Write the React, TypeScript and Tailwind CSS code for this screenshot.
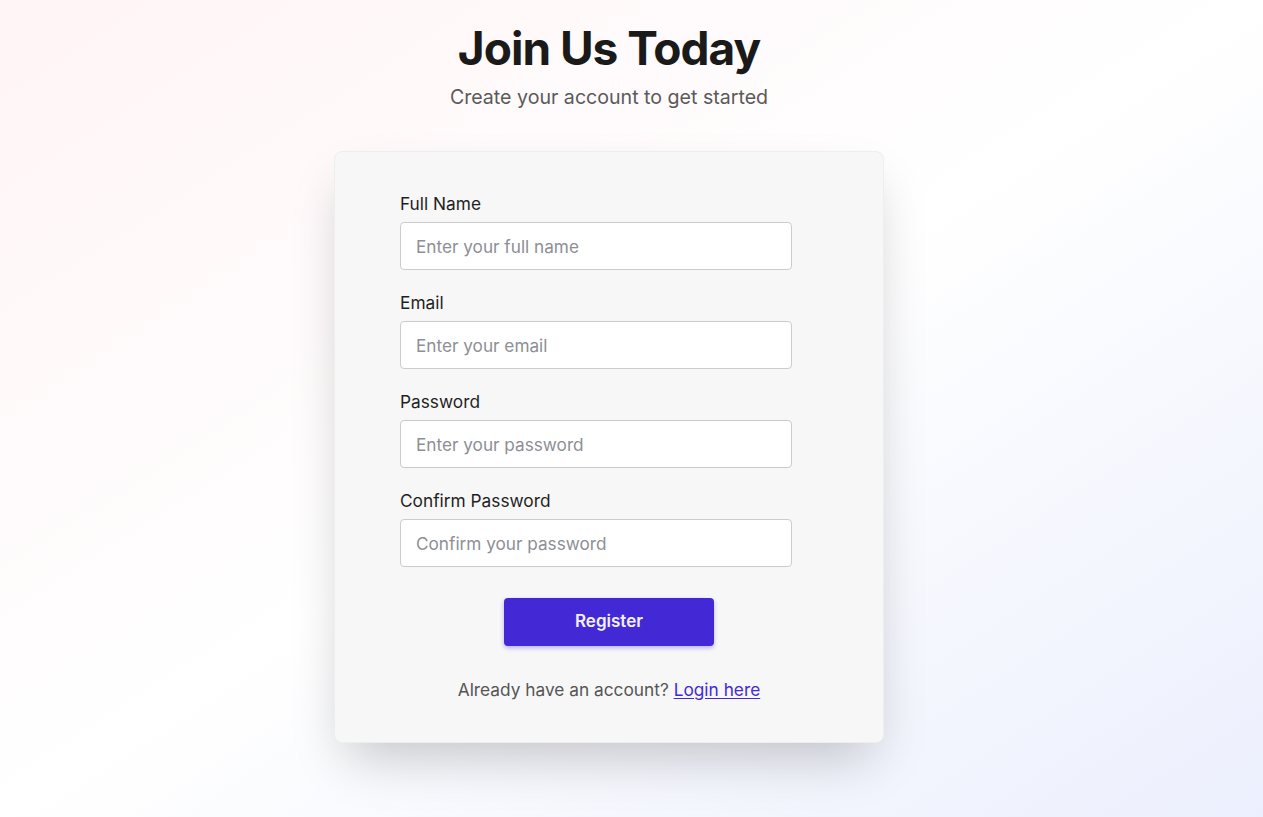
import { useState } from 'react'

function Field({ label, type, placeholder, value, onChange }: {
    label: string
    type: string
    placeholder: string
    value: string
    onChange: (v: string) => void
}) {
    return (
        <div className="mb-[21px] ml-px w-[392px]">
            <label className="block text-[17.3px] leading-6 text-[#1f1f1f] mb-1.5">{label}</label>
            <input
                type={type}
                placeholder={placeholder}
                value={value}
                onChange={(e) => onChange(e.target.value)}
                className="w-full h-12 px-[15px] bg-white border border-[#cccccc] rounded-[4px] text-[17.2px] text-[#1f1f1f] placeholder:text-[#8d8f95] outline-none"
            />
        </div>
    )
}

export default function App() {
    const [name, setName] = useState('')
    const [email, setEmail] = useState('')
    const [password, setPassword] = useState('')
    const [confirm, setConfirm] = useState('')

    return (
        <div
            className="min-h-[817px] w-full bg-gradient-to-br from-[#fff4f6] via-[#ffffff] to-[#eceffd] font-['Inter',sans-serif]"
        >
            <div className="w-[1218px] flex flex-col items-center pt-6">
                <h1 className="text-[46px] leading-[48px] font-bold text-[#1a1a1a] tracking-[-1px]">Join Us Today</h1>
                <p className="mt-[11px] text-[19.6px] leading-7 text-[#5a5a5a]">Create your account to get started</p>

                <div className="mt-[40px] w-[550px] bg-[#f7f7f7] rounded-lg border border-[#eeeeee] shadow-[0_25px_50px_-12px_rgba(0,0,0,0.22)] px-[64px] pt-10 pb-10">
                    <form onSubmit={(e) => e.preventDefault()} className="w-full">
                        <Field label="Full Name" type="text" placeholder="Enter your full name" value={name} onChange={setName} />
                        <Field label="Email" type="email" placeholder="Enter your email" value={email} onChange={setEmail} />
                        <Field label="Password" type="password" placeholder="Enter your password" value={password} onChange={setPassword} />
                        <Field label="Confirm Password" type="password" placeholder="Confirm your password" value={confirm} onChange={setConfirm} />

                        <div className="flex justify-center mt-[31px]">
                            <button
                                type="submit"
                                className="w-[210px] h-12 bg-[#4329d6] text-[#f2f0ff] text-[17px] font-semibold rounded-[4px] shadow-[0_2px_4px_rgba(67,41,214,0.35)]"
                            >
                                Register
                            </button>
                        </div>

                        <p className="mt-[32px] text-center text-[17.3px] leading-6 text-[#555555]">
                            Already have an account?{' '}
                            <a href="#" className="text-[#4329d6] underline underline-offset-2">Login here</a>
                        </p>
                    </form>
                </div>
            </div>
        </div>
    )
}
